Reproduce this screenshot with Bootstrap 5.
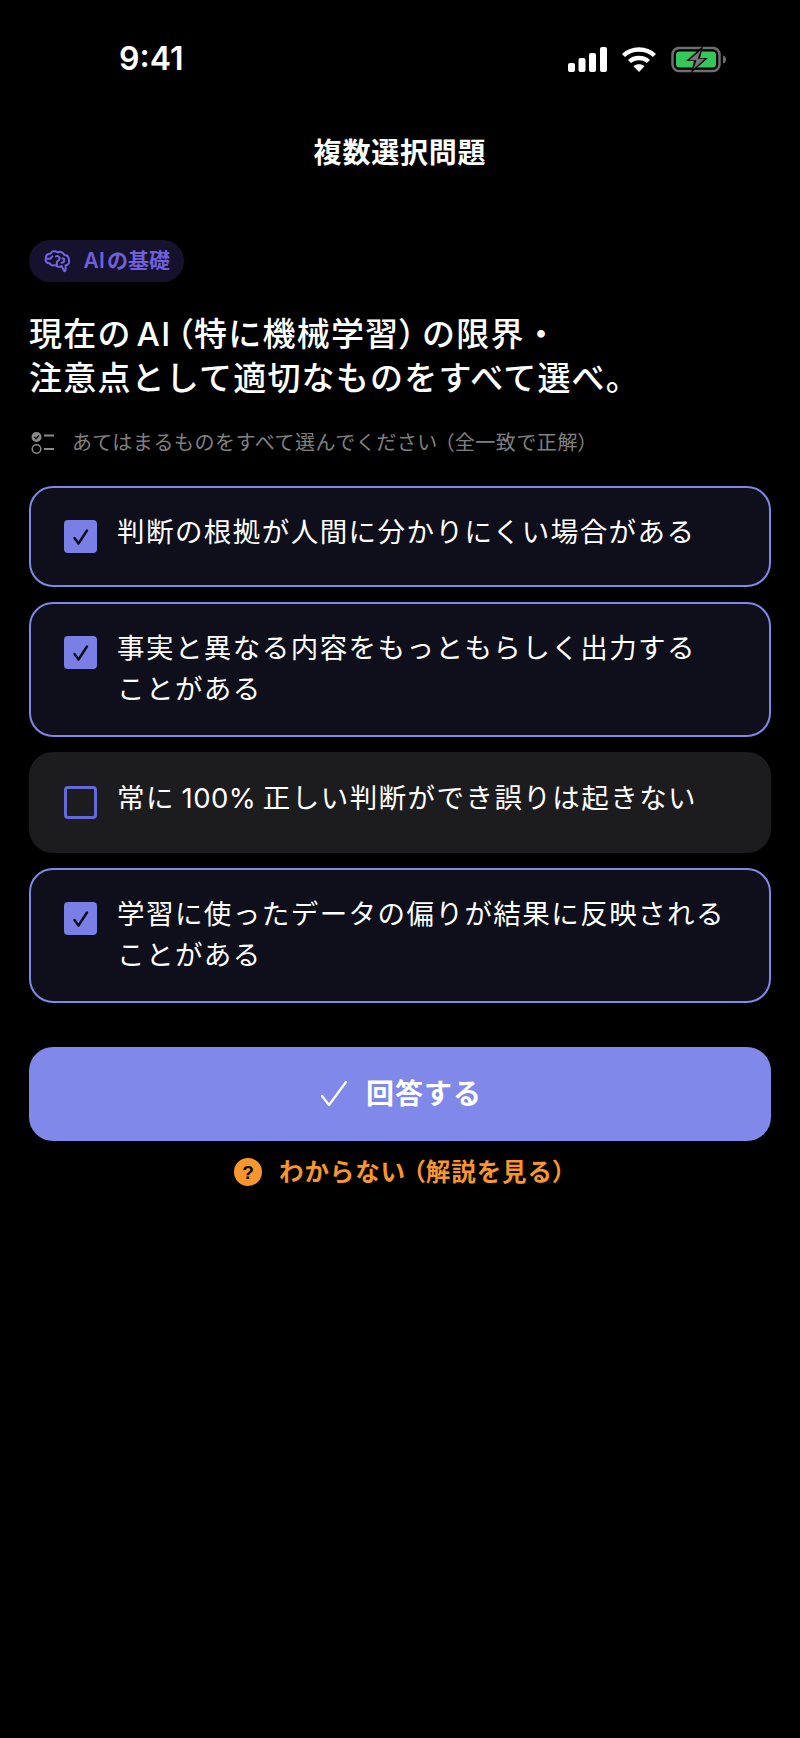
<!DOCTYPE html>
<html lang="ja">
<head>
<meta charset="utf-8">
<title>複数選択問題</title>
<link href="https://cdn.jsdelivr.net/npm/bootstrap@5.3.0/dist/css/bootstrap.min.css" rel="stylesheet">
<style>
html,body{background:#000;height:100%}
body{font-family:Inter,"Noto Sans CJK JP",sans-serif;color:#fff;width:800px;height:1738px;overflow:hidden}
.status-bar{height:133px;padding:38px 0 0 119px}
.clock{font-family:Inter,"Liberation Sans",sans-serif;font-size:32px;font-weight:600;line-height:42px;width:80px}
.status-icons{margin-left:auto;margin-right:73px;height:42px;gap:14px}
.page-title{font-size:28px;font-weight:700;line-height:40px;margin:0;letter-spacing:.8px;height:107px}
.content{padding:0 29px}
.topic-pill{background:#16122e;color:#6f5fd9;height:42px;border-radius:21px;padding:0 14px 0 15px;font-size:21px;font-weight:600;gap:12px;width:155px;white-space:nowrap;word-spacing:-3px}
.question{font-size:33px;font-weight:500;line-height:44px;margin:30px 0 0;letter-spacing:1.2px;word-spacing:-5px;white-space:nowrap}
.pp{font-feature-settings:"palt"}
.hint{color:#808080;font-size:20px;line-height:30px;margin:28px 0 0 2px;gap:17px;letter-spacing:.55px;white-space:nowrap}
.options{margin-top:28px;gap:15px}
.option{border-radius:24px;background:#1c1c1e;border:2px solid #1c1c1e;padding:24px 31px 25px 33px;gap:20px;font-size:27.5px;line-height:41px;letter-spacing:1.45px;word-spacing:-2.5px;min-height:101px}
.num{letter-spacing:.4px}
.option.on{background:#0e0f1a;border-color:#8088e6}
.tick{width:33px;height:33px;flex:none;border-radius:4px;margin-top:8px;border:3px solid #6469d8}
.on .tick{background:#7a7fe6;border:0}
.submit{margin-top:44px;height:94px;border-radius:24px;background:#8089e9;border:0;color:#fff;font-size:28px;font-weight:700;gap:18px;letter-spacing:1px;padding:0 0 0 2px}
.submit:hover{background:#8089e9;color:#fff}
.skip{color:#f7952f;font-size:24.5px;font-weight:700;margin-top:13px;gap:17px;line-height:36px;text-decoration:none;letter-spacing:.9px}
.q-dot{width:28px;height:28px;border-radius:50%;background:#f7952f;color:#000;font-family:"Liberation Sans",sans-serif;font-size:19px;font-weight:700;line-height:1;letter-spacing:0}
</style>
</head>
<body>
<div class="status-bar d-flex">
  <div class="clock">9:41</div>
  <div class="status-icons d-flex align-items-center">
    <svg width="39" height="25" viewBox="0 0 39 25" aria-hidden="true"><g fill="#fff"><rect x="0" y="16" width="7" height="9" rx="2"/><rect x="10.500" y="11" width="7" height="14" rx="2"/><rect x="21" y="6" width="7" height="19" rx="2"/><rect x="32" y="0" width="7" height="25" rx="2"/></g></svg>
    <svg width="36" height="27" viewBox="0 0 36 27" aria-hidden="true"><g fill="none" stroke="#fff" stroke-width="4.400"><path d="M2.500 9.500C11 1.500 25 1.500 33.500 9.500"/><path d="M8.500 15.500C13.500 10.800 22.500 10.800 27.500 15.500"/></g><path d="M12.500 20.300C15.800 17.700 20.200 17.700 23.500 20.300L18 26Z" fill="#fff"/></svg>
    <svg width="56" height="27" viewBox="0 0 56 27" aria-hidden="true"><rect x="1.500" y="2" width="47" height="23" rx="6.500" fill="none" stroke="#6e6e6e" stroke-width="2.500"/><rect x="5" y="5.500" width="40" height="16" rx="3.500" fill="#34c759"/><path d="M52 9.500c2 .5 3 2 3 4s-1 3.500-3 4z" fill="#6e6e6e"/><path d="M32 0 15 15h8l-3 12 17-15h-8l3-12z" fill="#000"/><path d="M30 4 18 14.300h7.500L22.500 23 34 12.700h-7.500z" fill="#767676"/></svg>
  </div>
</div>
<h1 class="page-title text-center">複数選択問題</h1>
<main class="content">
  <div class="topic-pill d-flex align-items-center">
    <svg width="30" height="26" viewBox="0 0 30 26" fill="none" stroke="#7263e0" stroke-width="2.200" stroke-linecap="round" stroke-linejoin="round" aria-hidden="true"><path d="M7 5C4 5 2 7 2 10c-1 3 1 5.500 4 5.500 1 2 4 3 6 2 2 2 5 2 7 1l3 5.500c1 0 1.500-1 1.500-2v-4.500c3 0 4.500-3 3.500-6 0-3-2-5-5-5-1-3-5-4-7-3C11.500 1.500 8.500 2 7 5z"/><path d="M2.500 10.500H7l2-2.500M13 8c2-1 4 0 4 2s-2 3-3 4v3.500M19 15c2 0 3-1.500 3-3s-1-2-2-2"/></svg>
    <span>AI の基礎</span>
  </div>
  <h2 class="question">現在の AI <span class="pp">（</span>特に機械学習<span class="pp">）</span> の限界・<br>注意点として適切なものをすべて選べ。</h2>
  <p class="hint d-flex align-items-center">
    <svg width="24" height="24" viewBox="0 0 24 24" aria-hidden="true"><circle cx="5.500" cy="6" r="5" fill="#8a8a8a"/><path d="M3.300 6l1.700 1.800 3-3.400" fill="none" stroke="#000" stroke-width="1.300"/><circle cx="5.500" cy="18" r="4.300" fill="none" stroke="#8a8a8a" stroke-width="1.500"/><path d="M13 4.500h10M13 18h10" stroke="#8a8a8a" stroke-width="1.800"/></svg>
    <span>あてはまるものをすべて選んでください <span class="pp">（</span>全一致で正解<span class="pp">）</span></span>
  </p>
  <div class="options d-flex flex-column">
    <div class="option on d-flex">
      <span class="tick d-flex align-items-center justify-content-center"><svg width="18" height="18" viewBox="0 0 18 18" fill="none" stroke="#0e0f1a" stroke-width="2.400" stroke-linecap="round" stroke-linejoin="round" aria-hidden="true"><path d="M2.500 10l4 5.500L15 2.500"/></svg></span>
      <span>判断の根拠が人間に分かりにくい場合がある</span>
    </div>
    <div class="option on d-flex">
      <span class="tick d-flex align-items-center justify-content-center"><svg width="18" height="18" viewBox="0 0 18 18" fill="none" stroke="#0e0f1a" stroke-width="2.400" stroke-linecap="round" stroke-linejoin="round" aria-hidden="true"><path d="M2.500 10l4 5.500L15 2.500"/></svg></span>
      <span>事実と異なる内容をもっともらしく出力する<span class="text-nowrap">ことがある</span></span>
    </div>
    <div class="option d-flex">
      <span class="tick"></span>
      <span>常に <span class="num">100%</span> 正しい判断ができ誤りは起きない</span>
    </div>
    <div class="option on d-flex">
      <span class="tick d-flex align-items-center justify-content-center"><svg width="18" height="18" viewBox="0 0 18 18" fill="none" stroke="#0e0f1a" stroke-width="2.400" stroke-linecap="round" stroke-linejoin="round" aria-hidden="true"><path d="M2.500 10l4 5.500L15 2.500"/></svg></span>
      <span>学習に使ったデータの偏りが結果に反映される<span class="text-nowrap">ことがある</span></span>
    </div>
  </div>
  <button type="button" class="btn submit w-100 d-flex align-items-center justify-content-center">
    <svg width="28" height="28" viewBox="0 0 28 28" fill="none" stroke="#fff" stroke-width="2.200" stroke-linecap="round" stroke-linejoin="round" aria-hidden="true"><path d="M2 16l7 9L26 2"/></svg>
    <span>回答する</span>
  </button>
  <a href="#" class="skip d-flex align-items-center justify-content-center">
    <span class="q-dot d-flex align-items-center justify-content-center">?</span>
    <span>わからない <span class="pp">（</span>解説を見る<span class="pp">）</span></span>
  </a>
</main>
</body>
</html>
